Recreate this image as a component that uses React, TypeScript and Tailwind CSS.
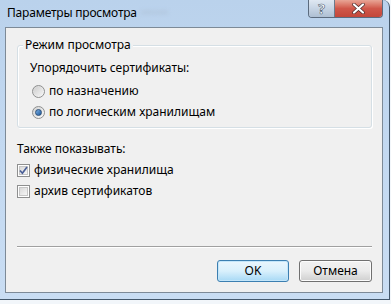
import React from 'react';

const font = { fontFamily: '"Noto Sans", "Open Sans", sans-serif' };

function Radio({ checked }: { checked?: boolean }) {
  return (
    <span className="flex h-[13px] w-[13px] items-center justify-center rounded-full border border-[#8e8f8f] bg-gradient-to-br from-[#d2d2d2] to-[#fbfbfb]">
      {checked ? (
        <span className="h-[7px] w-[7px] rounded-full border border-[#2b4e77] bg-gradient-to-br from-[#7ab0e6] to-[#1d5a9c]" />
      ) : (
        <span className="h-[9px] w-[9px] rounded-full bg-gradient-to-br from-[#cfcfcf] to-[#f4f4f4]" />
      )}
    </span>
  );
}

function Check({ checked }: { checked?: boolean }) {
  return (
    <span className="relative flex h-[13px] w-[13px] items-center justify-center border border-[#8e8f8f] bg-white">
      <span className="h-[9px] w-[9px] border border-[#c6c6c6] bg-gradient-to-br from-[#d9d9d9] to-[#f6f6f6]" />
      {checked && (
        <svg className="absolute left-[1px] top-[1px]" width="9" height="9" viewBox="0 0 9 9">
          <path d="M1 4.5 L3.4 7.2 L8 1" fill="none" stroke="#4a5f97" strokeWidth="1.7" />
        </svg>
      )}
    </span>
  );
}

export default function App() {
  return (
    <div className="h-[304px] w-[391px] bg-[#f2f6fa] text-[12px] text-black" style={font}>
      <div className="flex h-[300px] w-[390px] flex-col rounded-tr-[7px] border-r border-b border-[#43576b] bg-gradient-to-b from-[#bad2ec] via-[#c3d9f1] to-[#c9ddf3]">
        {/* title bar */}
        <div className="flex h-[27px] items-start">
          <div className="flex h-full flex-1 items-center pl-[7px] pb-[2px]">
            <span className="tracking-[-0.2px]">Параметры просмотра</span>
            <span className="ml-[4px] text-[#a9bbcf] blur-[2px]">••••••</span>
          </div>
          <div className="mr-[6px] flex h-[18px] overflow-hidden rounded-b-[4px] border border-t-0 border-[#5b6b7e]">
            <div className="flex w-[26px] items-center justify-center border-r border-[#6b7a8c] bg-gradient-to-b from-[#dfe8f2] via-[#c6d4e4] to-[#aebfd3]">
              <span className="text-[14px] font-bold leading-none text-white [-webkit-text-stroke:0.6px_#4b5b6e]">?</span>
            </div>
            <div className="flex w-[47px] items-center justify-center bg-gradient-to-b from-[#e8a596] via-[#d0574a] to-[#c3473a]">
              <svg width="13" height="11" viewBox="0 0 13 11">
                <path d="M2 1.5 L11 9.5 M11 1.5 L2 9.5" stroke="#4a2a2a" strokeWidth="3.6" strokeLinecap="round" />
                <path d="M2 1.5 L11 9.5 M11 1.5 L2 9.5" stroke="#ffffff" strokeWidth="2.2" strokeLinecap="round" />
              </svg>
            </div>
          </div>
        </div>

        {/* client area */}
        <div className="mb-[6px] ml-[5px] mr-[6px] flex flex-1 flex-col border border-[#7d8a97] bg-[#f0f0f0] pl-[11px] pr-[10px]">
          <div className="relative mt-[17px] h-[83px] rounded-[3px] border border-[#d5dfe5] shadow-[inset_1px_1px_0_#fff,1px_1px_0_#fff]">
            <span className="absolute -top-[9px] left-[5px] bg-[#f0f0f0] px-[2px] leading-[16px]">Режим просмотра</span>
            <div className="pl-[12px] pt-[14px]">
              <div className="leading-[16px]">Упорядочить сертификаты:</div>
              <div className="mt-[7px] flex items-center gap-[4px] pl-[2px] leading-[16px]">
                <Radio />
                <span>по назначению</span>
              </div>
              <div className="mt-[5px] flex items-center gap-[4px] pl-[2px] leading-[16px]">
                <Radio checked />
                <span>по логическим хранилищам</span>
              </div>
            </div>
          </div>

          <div className="mt-[13px] leading-[16px]">Также показывать:</div>
          <div className="mt-[5px] flex items-center gap-[4px] leading-[16px]">
            <Check checked />
            <span>физические хранилища</span>
          </div>
          <div className="mt-[5px] flex items-center gap-[4px] leading-[16px]">
            <Check />
            <span>архив сертификатов</span>
          </div>

          <div className="mt-auto border-t border-[#a0a0a0] shadow-[0_1px_0_#fff]" />
          <div className="mb-[10px] mt-[13px] flex justify-end gap-[10px]">
            <button className="h-[22px] w-[72px] rounded-[3px] border border-[#3c7fb1] bg-gradient-to-b from-[#eaf6fd] via-[#d9f0fc] to-[#a7d9f5] shadow-[inset_0_0_0_1px_#c4e6fa]">
              OK
            </button>
            <button className="h-[22px] w-[73px] rounded-[3px] border border-[#707070] bg-gradient-to-b from-[#f2f2f2] via-[#ebebeb] to-[#cfcfcf] shadow-[inset_0_0_0_1px_#fcfcfc]">
              Отмена
            </button>
          </div>
        </div>
      </div>
    </div>
  );
}
